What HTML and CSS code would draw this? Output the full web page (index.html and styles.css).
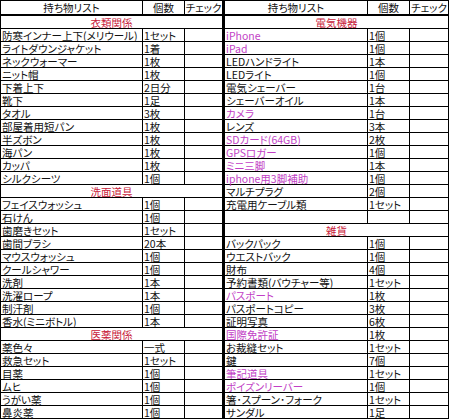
FILE: index.html
```html
<!DOCTYPE html>
<html lang="ja">
<head>
<meta charset="utf-8">
<link rel="stylesheet" href="styles.css">
</head>
<body>
<div class="sheet">
  <div class="half left">
    <div class="c hd">持ち物リスト</div><div class="c hd">個数</div><div class="c hd">チェック</div>
    <div class="c sec">衣類関係</div>
    <div class="c">防寒インナー上下(メリウール)</div><div class="c">1セット</div><div class="c"></div>
    <div class="c">ライトダウンジャケット</div><div class="c">1着</div><div class="c"></div>
    <div class="c">ネックウォーマー</div><div class="c">1枚</div><div class="c"></div>
    <div class="c">ニット帽</div><div class="c">1枚</div><div class="c"></div>
    <div class="c">下着上下</div><div class="c">2日分</div><div class="c"></div>
    <div class="c">靴下</div><div class="c">1足</div><div class="c"></div>
    <div class="c">タオル</div><div class="c">3枚</div><div class="c"></div>
    <div class="c">部屋着用短パン</div><div class="c">1枚</div><div class="c"></div>
    <div class="c">半ズボン</div><div class="c">1枚</div><div class="c"></div>
    <div class="c">海パン</div><div class="c">1枚</div><div class="c"></div>
    <div class="c">カッパ</div><div class="c">1枚</div><div class="c"></div>
    <div class="c">シルクシーツ</div><div class="c">1個</div><div class="c"></div>
    <div class="c sec">洗面道具</div>
    <div class="c">フェイスウォッシュ</div><div class="c">1個</div><div class="c"></div>
    <div class="c">石けん</div><div class="c">1個</div><div class="c"></div>
    <div class="c">歯磨きセット</div><div class="c">1セット</div><div class="c"></div>
    <div class="c">歯間ブラシ</div><div class="c">20本</div><div class="c"></div>
    <div class="c">マウスウォッシュ</div><div class="c">1個</div><div class="c"></div>
    <div class="c">クールシャワー</div><div class="c">1個</div><div class="c"></div>
    <div class="c">洗剤</div><div class="c">1本</div><div class="c"></div>
    <div class="c">洗濯ロープ</div><div class="c">1本</div><div class="c"></div>
    <div class="c">制汗剤</div><div class="c">1個</div><div class="c"></div>
    <div class="c">香水(ミニボトル)</div><div class="c">1本</div><div class="c"></div>
    <div class="c sec">医薬関係</div>
    <div class="c">薬色々</div><div class="c">一式</div><div class="c"></div>
    <div class="c">救急セット</div><div class="c">1セット</div><div class="c"></div>
    <div class="c">目薬</div><div class="c">1個</div><div class="c"></div>
    <div class="c">ムヒ</div><div class="c">1個</div><div class="c"></div>
    <div class="c">うがい薬</div><div class="c">1個</div><div class="c"></div>
    <div class="c">鼻炎薬</div><div class="c">1個</div><div class="c"></div>
  </div>
  <div class="half right">
    <div class="c hd">持ち物リスト</div><div class="c hd">個数</div><div class="c hd">チェック</div>
    <div class="c sec">電気機器</div>
    <div class="c pk">iPhone</div><div class="c">1個</div><div class="c"></div>
    <div class="c pk">iPad</div><div class="c">1個</div><div class="c"></div>
    <div class="c">LEDハンドライト</div><div class="c">1本</div><div class="c"></div>
    <div class="c">LEDライト</div><div class="c">1個</div><div class="c"></div>
    <div class="c">電気シェーバー</div><div class="c">1台</div><div class="c"></div>
    <div class="c">シェーバーオイル</div><div class="c">1本</div><div class="c"></div>
    <div class="c pk">カメラ</div><div class="c">1台</div><div class="c"></div>
    <div class="c">レンズ</div><div class="c">3本</div><div class="c"></div>
    <div class="c pk">SDカード(64GB)</div><div class="c">2枚</div><div class="c"></div>
    <div class="c pk">GPSロガー</div><div class="c">1個</div><div class="c"></div>
    <div class="c pk">ミニ三脚</div><div class="c">1本</div><div class="c"></div>
    <div class="c pk">iphone用3脚補助</div><div class="c">1個</div><div class="c"></div>
    <div class="c">マルチプラグ</div><div class="c">2個</div><div class="c"></div>
    <div class="c">充電用ケーブル類</div><div class="c">1セット</div><div class="c"></div>
    <div class="c"></div><div class="c"></div><div class="c"></div>
    <div class="c sec">雑貨</div>
    <div class="c">バックパック</div><div class="c">1個</div><div class="c"></div>
    <div class="c">ウエストバック</div><div class="c">1個</div><div class="c"></div>
    <div class="c">財布</div><div class="c">4個</div><div class="c"></div>
    <div class="c">予約書類(バウチャー等)</div><div class="c">1セット</div><div class="c"></div>
    <div class="c pk">パスポート</div><div class="c">1枚</div><div class="c"></div>
    <div class="c">パスポートコピー</div><div class="c">3枚</div><div class="c"></div>
    <div class="c">証明写真</div><div class="c">6枚</div><div class="c"></div>
    <div class="c pk">国際免許証</div><div class="c">1枚</div><div class="c"></div>
    <div class="c">お裁縫セット</div><div class="c">1セット</div><div class="c"></div>
    <div class="c">鍵</div><div class="c">7個</div><div class="c"></div>
    <div class="c pk">筆記道具</div><div class="c">1セット</div><div class="c"></div>
    <div class="c pk">ポイズンリーバー</div><div class="c">1個</div><div class="c"></div>
    <div class="c">箸･スプーン･フォーク</div><div class="c">1セット</div><div class="c"></div>
    <div class="c">サンダル</div><div class="c">1足</div><div class="c"></div>
  </div>
</div>
</body>
</html>
```
FILE: styles.css
```css
html, body {
  margin: 0;
  padding: 0;
  background: #fff;
}
body {
  font-family: "Noto Sans CJK JP", "Liberation Sans", sans-serif;
  font-size: 10.5px;
  font-feature-settings: "palt";
  color: #111;
}
.sheet {
  display: flex;
  align-items: flex-start;
}
.half {
  display: grid;
  grid-template-rows: 15px repeat(31, 13px);
  border-top: 1px solid #000;
  border-left: 1px solid #000;
}
.left {
  grid-template-columns: 142px 42px 38px;
}
.right {
  grid-template-columns: 143px 42px 39px;
  border-left: 2px solid #000;
}
.c {
  box-sizing: border-box;
  border-right: 1px solid #000;
  border-bottom: 1px solid #000;
  display: flex;
  align-items: center;
  padding-left: 1px;
  line-height: 11px;
  white-space: nowrap;
}
.hd {
  justify-content: center;
  padding-left: 0;
  border-bottom-width: 2px;
}
.sec {
  grid-column: 1 / span 3;
  justify-content: center;
  color: #c8203a;
  padding-left: 0;
}
.pk {
  color: #c23fc6;
}
```
